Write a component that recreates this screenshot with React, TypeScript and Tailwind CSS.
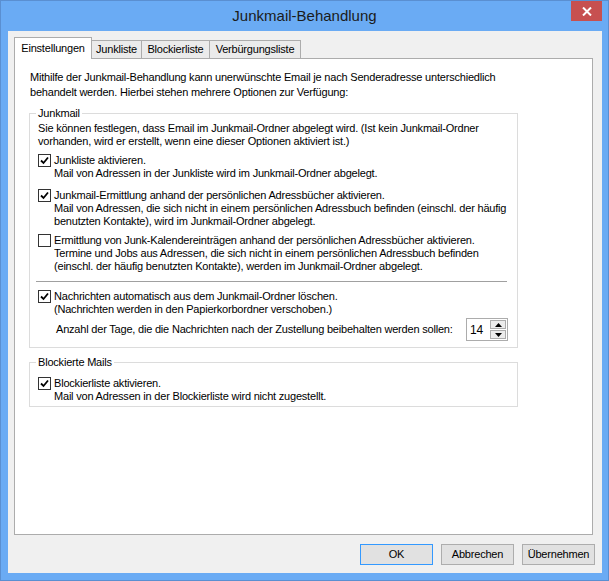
import React from 'react';

const TABS = [
  { id: 'settings', label: 'Einstellungen', w: 'w-[78px]' },
  { id: 'junk', label: 'Junkliste', w: 'w-[50px]' },
  { id: 'block', label: 'Blockierliste', w: 'w-[68px]' },
  { id: 'safe', label: 'Verbürgungsliste', w: 'w-[91px]' },
];

function Check({ checked }: { checked: boolean }) {
  return (
    <div className="w-[13px] h-[13px] shrink-0 border border-[#333] bg-white flex items-center justify-center">
      {checked && (
        <svg width="9" height="9" viewBox="0 0 9 9">
          <path d="M1 4.5 L3.5 7 L8 1.5" fill="none" stroke="#000" strokeWidth="1.8" />
        </svg>
      )}
    </div>
  );
}

function CheckRow({ checked, lines, className = '' }: { checked: boolean; lines: string[]; className?: string }) {
  return (
    <div className={`flex items-start gap-[3px] ml-[8px] ${className}`}>
      <Check checked={checked} />
      <div className="leading-[13px]">
        {lines.map(l => (
          <div key={l} className="whitespace-nowrap">{l}</div>
        ))}
      </div>
    </div>
  );
}

function Spin() {
  return (
    <div className="w-[42px] h-[23px] shrink-0 border border-[#acacac] bg-white flex items-center justify-between pl-[3px] pr-[1px]">
      <span className="text-[12px]">14</span>
      <div className="flex flex-col gap-[1px]">
        <div className="w-[16px] h-[9px] border border-[#acacac] bg-[#ececec] flex items-center justify-center">
          <svg width="7" height="4" viewBox="0 0 7 4"><path d="M0 4 L3.5 0 L7 4 Z" fill="#000" /></svg>
        </div>
        <div className="w-[16px] h-[9px] border border-[#acacac] bg-[#ececec] flex items-center justify-center">
          <svg width="7" height="4" viewBox="0 0 7 4"><path d="M0 0 L3.5 4 L7 0 Z" fill="#000" /></svg>
        </div>
      </div>
    </div>
  );
}

export default function App() {
  return (
    <div className="w-[609px] h-[581px] bg-[#6aabf4] border border-[#5a8fd1] flex flex-col text-[11px] tracking-[-0.2px] text-black font-['Liberation_Sans',Arial,sans-serif]">
      {/* title bar */}
      <div className="relative h-[30px] flex items-center justify-center">
        <span className="text-[15px] tracking-normal text-[#1b1b1b] pt-[1px]">Junkmail-Behandlung</span>
        <div className="absolute top-0 right-[6px] w-[31px] h-[20px] bg-[#c75050] flex items-center justify-center">
          <svg width="10" height="9" viewBox="0 0 10 9">
            <path d="M1 0.5 L9 8.5 M9 0.5 L1 8.5" stroke="#fff" strokeWidth="2" />
          </svg>
        </div>
      </div>

      {/* client */}
      <div className="ml-[7px] w-[594px] h-[542px] bg-[#f0f0f0] pl-[6px] pt-[6px] flex flex-col">
        <div className="flex items-end h-[21px]">
          {TABS.map((t, i) =>
            i === 0 ? (
              <div
                key={t.id}
                className={`${t.w} h-[22px] -mb-px z-10 bg-white border border-b-0 border-[#acacac] flex items-center justify-center pb-[1px]`}
              >
                {t.label}
              </div>
            ) : (
              <div
                key={t.id}
                className={`${t.w} h-[18px] bg-[#ebebeb] border-t border-r border-[#acacac] flex items-center justify-center`}
              >
                {t.label}
              </div>
            )
          )}
        </div>

        <div className="w-[579px] h-[477px] bg-white border border-[#acacac] flex flex-col">
          <div className="pl-[15px] pt-[11px] leading-[15px]">
            <div>Mithilfe der Junkmail-Behandlung kann unerwünschte Email je nach Senderadresse unterschiedlich</div>
            <div>behandelt werden. Hierbei stehen mehrere Optionen zur Verfügung:</div>
          </div>

          <fieldset className="ml-[14px] mt-[6px] w-[489px] min-w-0 border border-[#dcdcdc] pb-[6px]">
            <legend className="ml-[6px] px-[2px] leading-[14px]">Junkmail</legend>
            <div className="ml-[8px] mt-[2px] leading-[13px]">
              <div>Sie können festlegen, dass Email im Junkmail-Ordner abgelegt wird. (Ist kein Junkmail-Ordner</div>
              <div>vorhanden, wird er erstellt, wenn eine dieser Optionen aktiviert ist.)</div>
            </div>
            <CheckRow
              className="mt-[6px]"
              checked
              lines={['Junkliste aktivieren.', 'Mail von Adressen in der Junkliste wird im Junkmail-Ordner abgelegt.']}
            />
            <CheckRow
              className="mt-[9px]"
              checked
              lines={[
                'Junkmail-Ermittlung anhand der persönlichen Adressbücher aktivieren.',
                'Mail von Adressen, die sich nicht in einem persönlichen Adressbuch befinden (einschl. der häufig',
                'benutzten Kontakte), wird im Junkmail-Ordner abgelegt.',
              ]}
            />
            <CheckRow
              className="mt-[6px]"
              checked={false}
              lines={[
                'Ermittlung von Junk-Kalendereinträgen anhand der persönlichen Adressbücher aktivieren.',
                'Termine und Jobs aus Adressen, die sich nicht in einem persönlichen Adressbuch befinden',
                '(einschl. der häufig benutzten Kontakte), werden im Junkmail-Ordner abgelegt.',
              ]}
            />
            <div className="ml-[6px] mt-[8px] w-[471px] h-px bg-[#a0a0a0]" />
            <CheckRow
              className="mt-[8px]"
              checked
              lines={['Nachrichten automatisch aus dem Junkmail-Ordner löschen.', '(Nachrichten werden in den Papierkorbordner verschoben.)']}
            />
            <div className="mt-[2px] ml-[26px] mr-[9px] flex items-center justify-between">
              <span>Anzahl der Tage, die die Nachrichten nach der Zustellung beibehalten werden sollen:</span>
              <Spin />
            </div>
          </fieldset>

          <fieldset className="ml-[14px] mt-[7px] w-[489px] min-w-0 border border-[#dcdcdc] pb-[3px]">
            <legend className="ml-[6px] px-[2px] leading-[14px]">Blockierte Mails</legend>
            <CheckRow
              className="mt-[8px]"
              checked
              lines={['Blockierliste aktivieren.', 'Mail von Adressen in der Blockierliste wird nicht zugestellt.']}
            />
          </fieldset>
        </div>

        <div className="mt-[9px] pr-[7px] flex justify-end gap-[8px]">
          <button className="w-[73px] h-[21px] bg-[#e1e1e1] border border-[#3399ff] leading-none">OK</button>
          <button className="w-[73px] h-[21px] bg-[#e1e1e1] border border-[#adadad] leading-none">Abbrechen</button>
          <button className="w-[73px] h-[21px] bg-[#e1e1e1] border border-[#adadad] leading-none">Übernehmen</button>
        </div>
      </div>
    </div>
  );
}
